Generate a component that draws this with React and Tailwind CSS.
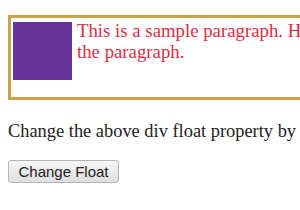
export default function App() {
  return (
    <div className="w-[300px] h-[210px] overflow-hidden bg-white pl-2 pt-[15px]" style={{ fontFamily: '"Liberation Serif", serif' }}>
      <div className="w-[340px] h-[85px] border-[3px] border-[#c9a44c] pl-[2px] pt-[4px] flex gap-[5px]">
        <div className="w-[59px] h-[58px] bg-[#663399] shrink-0"></div>
        <p className="text-[18.8px] leading-[21px] text-[#dc2d45] -mt-[2px] whitespace-nowrap">
          This is a sample paragraph. Here is some text around
          <br />
          the paragraph.
        </p>
      </div>
      <p className="mt-[21px] text-[18.4px] leading-[21px] text-[#222] whitespace-nowrap">
        Change the above div float property by&nbsp; clicking the button.
      </p>
      <button className="mt-[18px] h-[23px] w-[111px] border border-[#b5b5b5] rounded-[3px] bg-gradient-to-b from-[#f7f7f7] to-[#dedede] text-[15px] text-[#222] leading-none" style={{ fontFamily: '"Liberation Sans", Arial, sans-serif' }}>
        Change Float
      </button>
    </div>
  );
}
